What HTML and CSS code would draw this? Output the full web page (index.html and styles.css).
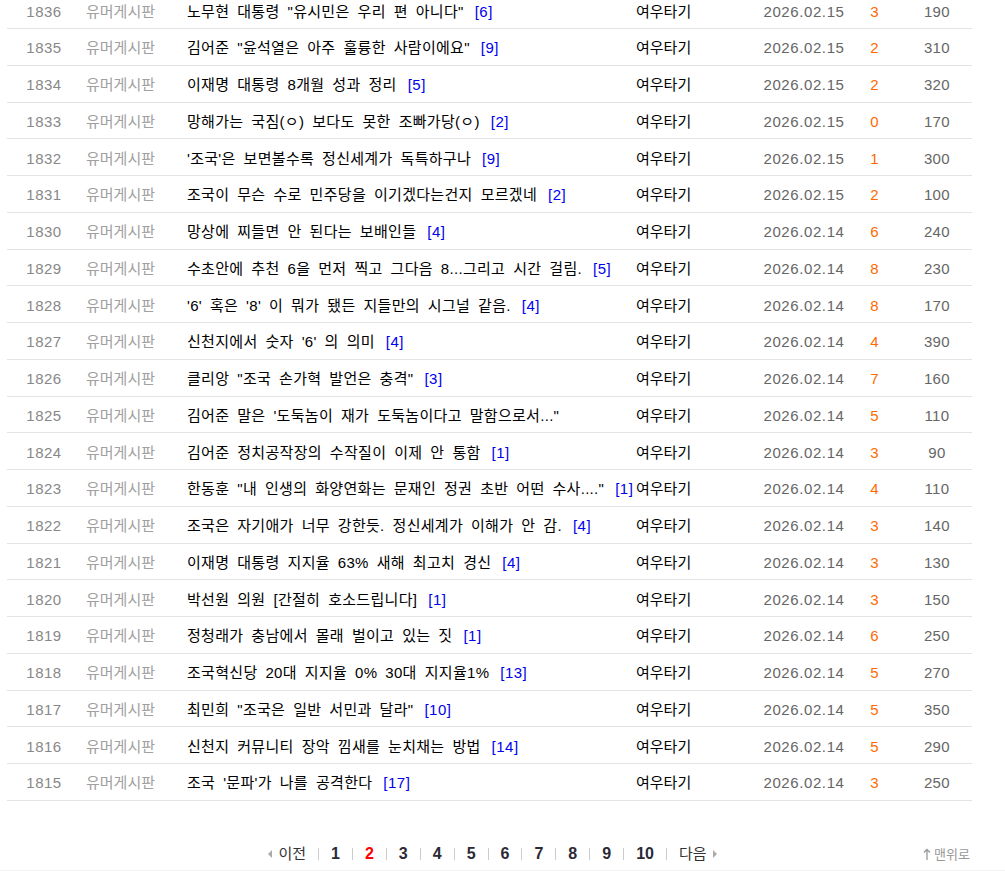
FILE: index.html
```html
<!DOCTYPE html>
<html lang="ko">
<head>
    <meta charset="UTF-8">
    <title>유머게시판</title>
    <link rel="stylesheet" href="styles.css">
</head>
<body>
    <div class="board">
        <ul class="list">
            <li class="row"><span class="no">1836</span><span class="cat">유머게시판</span><span class="subj">노무현 대통령 "유시민은 우리 편 아니다" <em class="cmt">[6]</em></span><span class="name">여우타기</span><span class="date">2026.02.15</span><span class="rec">3</span><span class="hit">190</span></li>
            <li class="row"><span class="no">1835</span><span class="cat">유머게시판</span><span class="subj">김어준 "윤석열은 아주 훌륭한 사람이에요" <em class="cmt">[9]</em></span><span class="name">여우타기</span><span class="date">2026.02.15</span><span class="rec">2</span><span class="hit">310</span></li>
            <li class="row"><span class="no">1834</span><span class="cat">유머게시판</span><span class="subj">이재명 대통령 8개월 성과 정리 <em class="cmt">[5]</em></span><span class="name">여우타기</span><span class="date">2026.02.15</span><span class="rec">2</span><span class="hit">320</span></li>
            <li class="row"><span class="no">1833</span><span class="cat">유머게시판</span><span class="subj">망해가는 국짐(ㅇ) 보다도 못한 조빠가당(ㅇ) <em class="cmt">[2]</em></span><span class="name">여우타기</span><span class="date">2026.02.15</span><span class="rec">0</span><span class="hit">170</span></li>
            <li class="row"><span class="no">1832</span><span class="cat">유머게시판</span><span class="subj">'조국'은 보면볼수록 정신세계가 독특하구나 <em class="cmt">[9]</em></span><span class="name">여우타기</span><span class="date">2026.02.15</span><span class="rec">1</span><span class="hit">300</span></li>
            <li class="row"><span class="no">1831</span><span class="cat">유머게시판</span><span class="subj">조국이 무슨 수로 민주당을 이기겠다는건지 모르겠네 <em class="cmt">[2]</em></span><span class="name">여우타기</span><span class="date">2026.02.15</span><span class="rec">2</span><span class="hit">100</span></li>
            <li class="row"><span class="no">1830</span><span class="cat">유머게시판</span><span class="subj">망상에 찌들면 안 된다는 보배인들 <em class="cmt">[4]</em></span><span class="name">여우타기</span><span class="date">2026.02.14</span><span class="rec">6</span><span class="hit">240</span></li>
            <li class="row"><span class="no">1829</span><span class="cat">유머게시판</span><span class="subj">수초안에 추천 6을 먼저 찍고 그다음 8...그리고 시간 걸림. <em class="cmt">[5]</em></span><span class="name">여우타기</span><span class="date">2026.02.14</span><span class="rec">8</span><span class="hit">230</span></li>
            <li class="row"><span class="no">1828</span><span class="cat">유머게시판</span><span class="subj">'6' 혹은 '8' 이 뭐가 됐든 지들만의 시그널 같음. <em class="cmt">[4]</em></span><span class="name">여우타기</span><span class="date">2026.02.14</span><span class="rec">8</span><span class="hit">170</span></li>
            <li class="row"><span class="no">1827</span><span class="cat">유머게시판</span><span class="subj">신천지에서 숫자 '6' 의 의미 <em class="cmt">[4]</em></span><span class="name">여우타기</span><span class="date">2026.02.14</span><span class="rec">4</span><span class="hit">390</span></li>
            <li class="row"><span class="no">1826</span><span class="cat">유머게시판</span><span class="subj">클리앙 "조국 손가혁 발언은 충격" <em class="cmt">[3]</em></span><span class="name">여우타기</span><span class="date">2026.02.14</span><span class="rec">7</span><span class="hit">160</span></li>
            <li class="row"><span class="no">1825</span><span class="cat">유머게시판</span><span class="subj">김어준 말은 '도둑놈이 재가 도둑놈이다고 말함으로서..."</span><span class="name">여우타기</span><span class="date">2026.02.14</span><span class="rec">5</span><span class="hit">110</span></li>
            <li class="row"><span class="no">1824</span><span class="cat">유머게시판</span><span class="subj">김어준 정치공작장의 수작질이 이제 안 통함 <em class="cmt">[1]</em></span><span class="name">여우타기</span><span class="date">2026.02.14</span><span class="rec">3</span><span class="hit">90</span></li>
            <li class="row"><span class="no">1823</span><span class="cat">유머게시판</span><span class="subj">한동훈 "내 인생의 화양연화는 문재인 정권 초반 어떤 수사...." <em class="cmt">[1]</em></span><span class="name">여우타기</span><span class="date">2026.02.14</span><span class="rec">4</span><span class="hit">110</span></li>
            <li class="row"><span class="no">1822</span><span class="cat">유머게시판</span><span class="subj">조국은 자기애가 너무 강한듯. 정신세계가 이해가 안 감. <em class="cmt">[4]</em></span><span class="name">여우타기</span><span class="date">2026.02.14</span><span class="rec">3</span><span class="hit">140</span></li>
            <li class="row"><span class="no">1821</span><span class="cat">유머게시판</span><span class="subj">이재명 대통령 지지율 63% 새해 최고치 경신 <em class="cmt">[4]</em></span><span class="name">여우타기</span><span class="date">2026.02.14</span><span class="rec">3</span><span class="hit">130</span></li>
            <li class="row"><span class="no">1820</span><span class="cat">유머게시판</span><span class="subj">박선원 의원 [간절히 호소드립니다] <em class="cmt">[1]</em></span><span class="name">여우타기</span><span class="date">2026.02.14</span><span class="rec">3</span><span class="hit">150</span></li>
            <li class="row"><span class="no">1819</span><span class="cat">유머게시판</span><span class="subj">정청래가 충남에서 몰래 벌이고 있는 짓 <em class="cmt">[1]</em></span><span class="name">여우타기</span><span class="date">2026.02.14</span><span class="rec">6</span><span class="hit">250</span></li>
            <li class="row"><span class="no">1818</span><span class="cat">유머게시판</span><span class="subj">조국혁신당 20대 지지율 0% 30대 지지율1% <em class="cmt">[13]</em></span><span class="name">여우타기</span><span class="date">2026.02.14</span><span class="rec">5</span><span class="hit">270</span></li>
            <li class="row"><span class="no">1817</span><span class="cat">유머게시판</span><span class="subj">최민희 "조국은 일반 서민과 달라" <em class="cmt">[10]</em></span><span class="name">여우타기</span><span class="date">2026.02.14</span><span class="rec">5</span><span class="hit">350</span></li>
            <li class="row"><span class="no">1816</span><span class="cat">유머게시판</span><span class="subj">신천지 커뮤니티 장악 낌새를 눈치채는 방법 <em class="cmt">[14]</em></span><span class="name">여우타기</span><span class="date">2026.02.14</span><span class="rec">5</span><span class="hit">290</span></li>
            <li class="row"><span class="no">1815</span><span class="cat">유머게시판</span><span class="subj">조국 '문파'가 나를 공격한다 <em class="cmt">[17]</em></span><span class="name">여우타기</span><span class="date">2026.02.14</span><span class="rec">3</span><span class="hit">250</span></li>
        </ul>

        <!-- paging -->
        <div class="foot">
            <div class="paging">
                <a class="prev" href="#"><i class="tri tri-l"></i>이전</a>
                <a class="pg" href="#">1</a>
                <a class="pg on" href="#">2</a>
                <a class="pg" href="#">3</a>
                <a class="pg" href="#">4</a>
                <a class="pg" href="#">5</a>
                <a class="pg" href="#">6</a>
                <a class="pg" href="#">7</a>
                <a class="pg" href="#">8</a>
                <a class="pg" href="#">9</a>
                <a class="pg" href="#">10</a>
                <a class="next" href="#">다음<i class="tri tri-r"></i></a>
            </div>
            <a class="top" href="#"><svg class="arr" width="8" height="12" viewBox="0 0 8 12"><path d="M4 1.5V12M1 4.5L4 1.5L7 4.5" fill="none" stroke="#999" stroke-width="1.3"/></svg>맨위로</a>
        </div>
    </div>
</body>
</html>
```

FILE: styles.css
```css
body { margin: 0; font-family: "Liberation Sans", "Noto Sans CJK KR", sans-serif; font-size: 15px; color: #000; background: #fff; }
a { text-decoration: none; color: inherit; }
em { font-style: normal; }

.board { width: 965px; margin: 0 0 0 7px; }

.list { list-style: none; margin: -7.76px 0 0; padding: 0; }
.row { display: grid; grid-template-columns: 74px 79px 473px 128px 86px 55px 70px; align-items: center; height: 36.76px; box-sizing: border-box; border-bottom: 1px solid #e3e3e3; padding-top: 3px; line-height: 20px; white-space: nowrap; }
.no { text-align: center; color: #888; letter-spacing: 0.5px; }
.cat { text-align: center; color: #a0a0a0; }
.subj { padding-left: 27px; word-spacing: 3.5px; letter-spacing: 0.3px; }
.cmt { color: #0000ee; margin-left: 3px; letter-spacing: 0.5px; }
.name { padding-left: 3px; }
.date { text-align: center; color: #666; letter-spacing: 0.6px; }
.rec { text-align: center; color: #ff6a00; }
.hit { text-align: center; color: #666; letter-spacing: 0.4px; }

.foot { display: grid; grid-template-columns: 1fr auto 1fr; align-items: center; margin-top: 42px; height: 22px; }
.paging { grid-column: 2; display: flex; align-items: center; color: #333; margin-left: 6px; }
.paging a { display: flex; align-items: center; padding: 0 12px; border-left: 1px solid #ccc; height: 12px; line-height: 12px; }
.paging a:first-child { border-left: 0; }
.pg { font-weight: bold; font-size: 16px; color: #2a2a36; }
.pg.on { color: #f00; }
.prev, .next { font-size: 15px; color: #333; }
.tri { display: inline-block; width: 0; height: 0; border-top: 4px solid transparent; border-bottom: 4px solid transparent; }
.tri-l { border-right: 4px solid #aaa; margin-right: 6px; }
.tri-r { border-left: 4px solid #aaa; margin-left: 6px; }
.top { grid-column: 3; justify-self: end; display: flex; align-items: center; gap: 3px; font-size: 13px; color: #999; margin-right: 2px; }
.arr { display: block; }

body::after { content: ""; position: fixed; left: 0; right: 0; bottom: 0; height: 1px; background: #f3f3f3; }
```
